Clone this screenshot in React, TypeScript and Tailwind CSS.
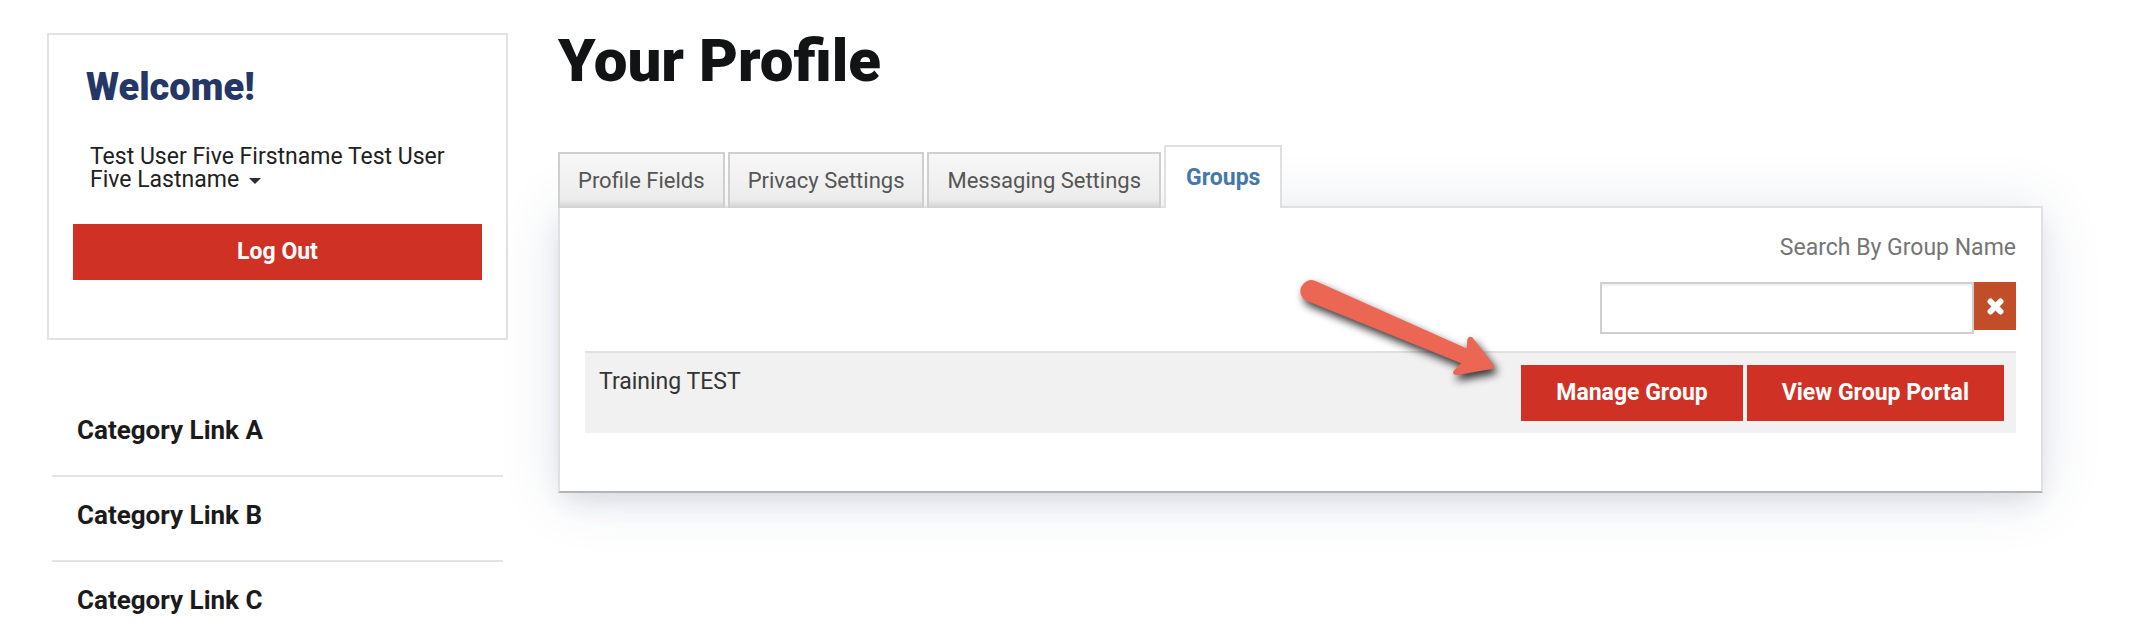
import { useState } from "react";

const tabs = ["Profile Fields", "Privacy Settings", "Messaging Settings", "Groups"];
const categories = ["Category Link A", "Category Link B", "Category Link C"];

function Arrow() {
  return (
    <svg
      aria-hidden="true"
      className="pointer-events-none absolute -top-[95px] right-full mr-2.5 h-[130px] w-[220px] overflow-visible drop-shadow-[3px_5px_4px_rgba(0,0,0,0.8)]"
      viewBox="0 0 220 130"
    >
      <path
        fill="#ec6654"
        d="M24.5 11 L175.7 78.5 L176.3 69.5 Q177.5 65.5 181.5 67.5 L202 94 Q204.5 97.500 200.5 99 L167 105 Q160.500 105 162.500 101 L170 93.300 L16 31 A10.800 10.800 0 0 1 24.500 11 Z"
      />
    </svg>
  );
}

function Sidebar() {
  return (
    <aside className="w-[461px] shrink-0 pt-[33px]">
      <section className="border-2 border-[#e2e2e2] px-6 pt-7 pb-[58px]">
        <h2 className="pl-[13px] text-[38px] leading-[48px] font-black text-[#253766]">Welcome!</h2>
        <button
          type="button"
          className="mt-[34px] block pl-[17px] text-left text-[23px] leading-[23px] text-[#212121]"
        >
          Test User Five Firstname Test User Five Lastname
          <span className="ml-2.5 inline-block border-x-[6px] border-t-[6px] border-x-transparent border-t-[#2b2b3a] align-middle" />
        </button>
        <button
          type="button"
          className="mt-[33px] h-14 w-full bg-[#cf3224] text-[23px] font-bold text-white"
        >
          Log Out
        </button>
      </section>
      <nav aria-label="Categories" className="mt-[52px] px-[5px]">
        <ul className="divide-y-2 divide-[#e4e4e4]">
          {categories.map((name) => (
            <li key={name}>
              <a href="#" className="flex h-[83px] items-center pb-1.5 pl-[25px] text-[26px] font-bold text-[#1b1b1b]">
                {name}
              </a>
            </li>
          ))}
        </ul>
      </nav>
    </aside>
  );
}

function GroupsPanel() {
  const [query, setQuery] = useState("");
  return (
    <section className="border-2 border-[#e0e0e0] border-b-[#b4b4b6] bg-white px-[25px] pt-6 pb-[58px] shadow-[0_4px_56px_rgba(50,60,110,0.13),0_12px_24px_-6px_rgba(50,50,80,0.12)]">
      <div className="flex flex-col items-end">
        <label htmlFor="group-search" className="text-[23px] leading-8 text-[#757575]">
          Search By Group Name
        </label>
        <div className="mt-[18px] flex items-start">
          <input
            id="group-search"
            type="text"
            value={query}
            onChange={(e) => setQuery(e.target.value)}
            className="h-[52px] w-[374px] border-2 border-[#cfcfcf] px-3 text-[23px] shadow-[inset_0_2px_2px_rgba(0,0,0,0.06)] outline-none"
          />
          <button
            type="button"
            aria-label="Clear search"
            onClick={() => setQuery("")}
            className="flex h-12 w-[42px] items-center justify-center bg-[#c14e29]"
          >
            <svg className="size-[17px]" viewBox="0 0 16 16" aria-hidden="true">
              <path d="M3.300 3.300 L12.700 12.700 M12.700 3.300 L3.300 12.700" stroke="#fff" strokeWidth="5.600" strokeLinecap="round" />
            </svg>
          </button>
        </div>
      </div>
      <table className="mt-[17px] w-full">
        <tbody>
          <tr className="border-t-2 border-[#e0e0e0] bg-[#f1f1f1]">
            <td className="pt-3.5 pl-3.5 align-top text-[23px] leading-[30px] text-[#333]">Training TEST</td>
            <td className="py-3 pr-3">
              <div className="relative ml-auto flex w-fit gap-1">
                <Arrow />
                <a href="#" className="flex h-14 items-center bg-[#cf3224] px-[35px] text-[23px] font-bold text-white">
                  Manage Group
                </a>
                <a href="#" className="flex h-14 items-center bg-[#cf3224] px-[35px] text-[23px] font-bold text-white">
                  View Group Portal
                </a>
              </div>
            </td>
          </tr>
        </tbody>
      </table>
    </section>
  );
}

export default function App() {
  return (
    <div className="flex gap-[50px] bg-white pr-[87px] pl-[47px] font-['Roboto',sans-serif]">
      <Sidebar />
      <main className="min-w-0 flex-1 pt-[25px]">
        <h1 className="text-[60px] leading-[72px] font-black text-[#111315]">Your Profile</h1>
        <div role="tablist" className="relative z-10 mt-12 -mb-0.5 flex items-end gap-[3px]">
          {tabs.map((tab) =>
            tab === "Groups" ? (
              <button
                key={tab}
                type="button"
                role="tab"
                aria-selected="true"
                className="h-[63px] border-2 border-b-0 border-[#e0e0e0] bg-white px-5 pt-0.5 text-[23px] font-bold text-[#4577ad]"
              >
                {tab}
              </button>
            ) : (
              <button
                key={tab}
                type="button"
                role="tab"
                aria-selected="false"
                className="h-14 border-2 border-b-0 border-[#cfcfcf] bg-linear-to-b from-[#f7f7f7] via-[#ececec] via-85% to-[#d0d0d0] px-[18px] pb-0.5 text-[22px] text-[#555]"
              >
                {tab}
              </button>
            ),
          )}
        </div>
        <GroupsPanel />
      </main>
    </div>
  );
}
